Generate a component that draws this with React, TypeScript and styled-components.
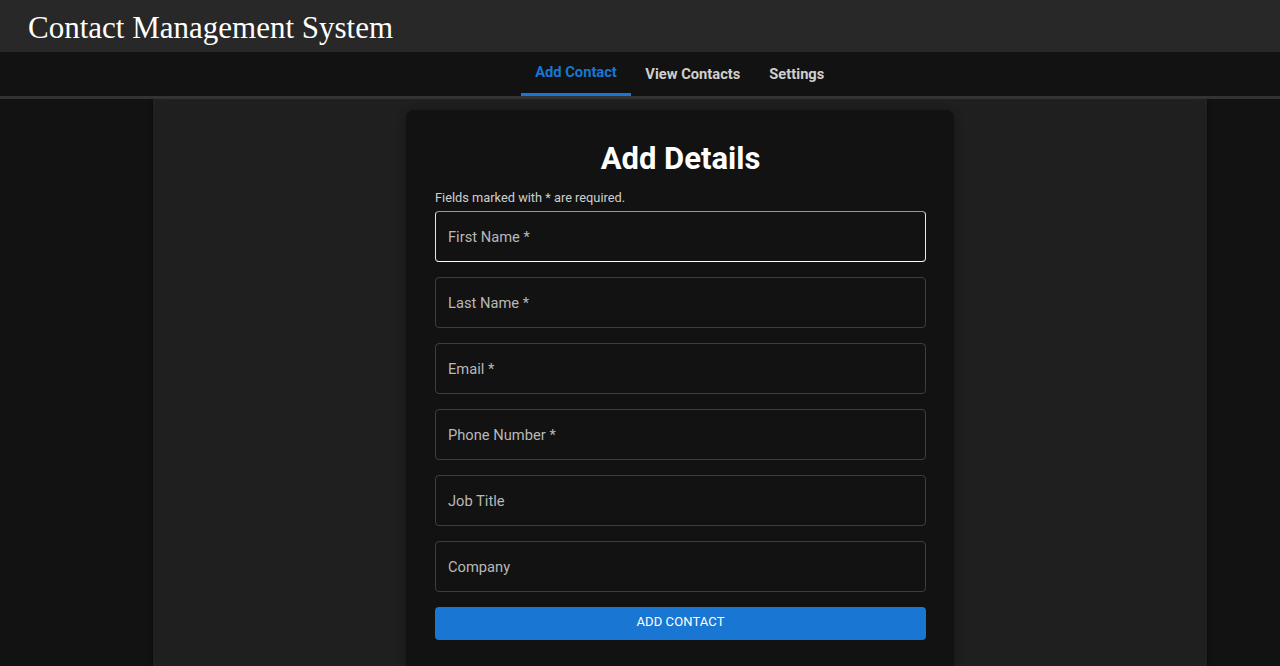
import React from "react";
import styled, { createGlobalStyle } from "styled-components";

const Global = createGlobalStyle`
  html, body { margin: 0; padding: 0; background: #121212; height: 100%; overflow: hidden; }
  #root { min-height: 100vh; }
  * { box-sizing: border-box; }
`;

const Page = styled.div`
  display: flex;
  flex-direction: column;
  height: 666px;
  background: #121212;
  overflow: hidden;
`;

const Header = styled.header`
  height: 52px;
  background: #282828;
  display: flex;
  align-items: center;
  padding-left: 28px;
`;

const Title = styled.h1`
  margin: 0;
  font-family: "Liberation Serif", "Times New Roman", serif;
  font-weight: 400;
  font-size: 31px;
  color: #ffffff;
  line-height: 1;
  padding-top: 2px;
`;

const Nav = styled.nav`
  height: 47px;
  background: #121212;
  border-bottom: 3px solid #333333;
  display: flex;
  justify-content: center;
  padding-left: 80px;
`;

const Tab = styled.div<{ $active?: boolean }>`
  position: relative;
  font-family: Roboto, "Noto Sans", sans-serif;
  font-weight: 700;
  font-size: 14.7px;
  padding: 0 14.5px;
  display: flex;
  align-items: center;
  height: 44px;
  color: ${(p) => (p.$active ? "#1976d2" : "#cfcfcf")};
  ${(p) =>
    p.$active
      ? `
    padding: 0 14px 4px;
    &::after {
      content: "";
      position: absolute;
      left: 0; right: 0; bottom: 0;
      height: 3px;
      background: #1976d2;
    }`
      : ""}
`;

const Body = styled.main`
  flex: 1;
  display: flex;
  justify-content: center;
  padding-left: 80px;
  overflow: hidden;
`;

const Container = styled.div`
  width: 1054px;
  flex-shrink: 0;
  background: #1f1f1f;
  box-shadow: inset 0 0 12px rgba(255, 255, 255, 0.02), 0 0 6px rgba(0, 0, 0, 0.4);
  display: flex;
  justify-content: center;
  padding-top: 11px;
`;

const Card = styled.section`
  width: 548px;
  background: #121212;
  border-radius: 8px 8px 0 0;
  box-shadow: 0 2px 8px rgba(0, 0, 0, 0.35);
  padding: 31px 28px 0 29px;
  display: flex;
  flex-direction: column;
`;

const Heading = styled.h2`
  margin: 0;
  text-align: center;
  font-family: Roboto, "Noto Sans", sans-serif;
  font-weight: 700;
  font-size: 31px;
  line-height: 36px;
  color: #ffffff;
`;

const Hint = styled.p`
  margin: 13px 0 5px;
  font-family: Roboto, "Noto Sans", sans-serif;
  font-size: 12.8px;
  line-height: 16px;
  color: #cfcfcf;
`;

const Fields = styled.div`
  display: flex;
  flex-direction: column;
  gap: 15px;
`;

const Field = styled.div<{ $hover?: boolean }>`
  height: 51px;
  border-radius: 4px;
  border: 1px solid ${(p) => (p.$hover ? "#e6e6e6" : "#3e3e3e")};
  ${(p) => (p.$hover ? "border-top-color: #9a9a9a; border-bottom-color: #ffffff;" : "")}
  display: flex;
  align-items: center;
  padding: 0 12px;
  font-family: Roboto, "Noto Sans", sans-serif;
  font-size: 14.7px;
  color: #b8b8b8;
`;

const Button = styled.button`
  margin-top: 15px;
  height: 33px;
  border: none;
  border-radius: 4px;
  background: #1976d2;
  color: #ffffff;
  font-family: Roboto, "Noto Sans", sans-serif;
  font-size: 13px;
  font-weight: 400;
  text-transform: uppercase;
  letter-spacing: 0.1px;
  padding: 0 0 4px;
  cursor: pointer;
`;

const fields = [
  "First Name *",
  "Last Name *",
  "Email *",
  "Phone Number *",
  "Job Title",
  "Company",
];

export default function App() {
  return (
    <Page>
      <Global />
      <Header>
        <Title>Contact Management System</Title>
      </Header>
      <Nav>
        <Tab $active>Add Contact</Tab>
        <Tab>View Contacts</Tab>
        <Tab>Settings</Tab>
      </Nav>
      <Body>
        <Container>
          <Card>
            <Heading>Add Details</Heading>
            <Hint>Fields marked with * are required.</Hint>
            <Fields>
              {fields.map((f, i) => (
                <Field key={f} $hover={i === 0}>
                  {f}
                </Field>
              ))}
            </Fields>
            <Button>Add Contact</Button>
          </Card>
        </Container>
      </Body>
    </Page>
  );
}
